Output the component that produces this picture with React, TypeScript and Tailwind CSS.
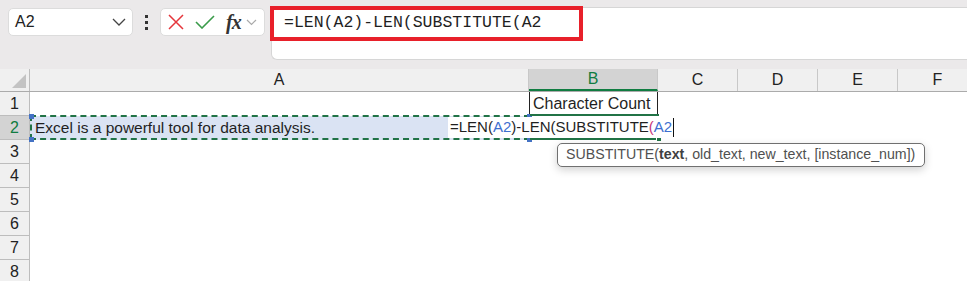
import React from 'react';

const cols = [
  {name: 'A', w: 'w-[499px]'},
  {name: 'B', w: 'w-[129px]', selected: true},
  {name: 'C', w: 'w-[80px]'},
  {name: 'D', w: 'w-[80px]'},
  {name: 'E', w: 'w-[80px]'},
  {name: 'F', w: 'w-[80px]'},
];

const sans = "font-['Liberation_Sans',Arial,sans-serif]";

export default function App() {
  return <div className="w-[967px] h-[281px] overflow-hidden bg-white relative">
    <Toolbar/>
    <Sheet/>
  </div>;
}

const Toolbar = () => {
  return <div className="h-[69px] bg-[#ebe9ea] flex items-start pt-[7px] pl-[8px]">
    <div className={`mt-[1px] w-[125px] h-[28px] bg-white rounded-[5px] border border-[#dcdcdc] flex items-center justify-between pl-[6px] pr-[6px] ${sans} text-[16px] text-[#222]`}>
      <span>A2</span>
      <svg width="14" height="8" viewBox="0 0 14 8" fill="none" stroke="#444" strokeWidth="1.3">
        <path d="M1 1l6 6 6-6"/>
      </svg>
    </div>
    <div className="w-[27px] h-[28px] mt-[1px] flex flex-col items-center justify-center gap-[3px]">
      <span className="w-[3px] h-[3px] bg-[#333]"/>
      <span className="w-[3px] h-[3px] bg-[#333]"/>
      <span className="w-[3px] h-[3px] bg-[#333]"/>
    </div>
    <div className="mt-[1px] w-[105px] h-[28px] bg-white rounded-[5px] border border-[#dcdcdc] flex items-center pl-[7px]">
      <svg width="16" height="16" viewBox="0 0 16 16" fill="none" stroke="#e5363c" strokeWidth="1.5">
        <path d="M1 1l14 14M15 1L1 15"/>
      </svg>
      <svg width="20" height="14" viewBox="0 0 20 14" fill="none" stroke="#3a9b4a" strokeWidth="1.6" className="ml-[11px]">
        <path d="M1 7l6 6L19 1"/>
      </svg>
      <span className="ml-[11px] font-['Liberation_Serif',serif] italic font-bold text-[20px] leading-none text-[#333] tracking-[-1px]">fx</span>
      <svg width="11" height="7" viewBox="0 0 11 7" fill="none" stroke="#aaa" strokeWidth="1.2" className="ml-[5px]">
        <path d="M1 1l4.5 4.5L10 1"/>
      </svg>
    </div>
    <div className="ml-[6px] flex-1 h-[53px] bg-white rounded-l-[6px] border border-r-0 border-[#d6d6d6] relative">
      <div className="absolute left-[-2px] top-[-2px] w-[313px] h-[35px] border-[4px] border-[#e8202a] flex items-center pl-[10px]">
        <span className="font-['Liberation_Mono',monospace] text-[16.5px] text-[#1f1f1f]">=LEN(A2)-LEN(SUBSTITUTE(A2</span>
      </div>
    </div>
  </div>;
}

const Sheet = () => {
  const rows = [1, 2, 3, 4, 5, 6, 7, 8];
  return <div className="relative">
    <div className="flex h-[23px] bg-[#f0f0f0] border-b border-[#ababab]">
      <div className="w-[30px] shrink-0 border-r border-[#bdbdbd] relative">
        <svg width="14" height="14" viewBox="0 0 14 14" className="absolute right-[3px] bottom-[3px]">
          <path d="M14 0V14H0Z" fill="#c3c3c3"/>
        </svg>
      </div>
      {cols.map(c => <div key={c.name} className={`${c.w} shrink-0 flex items-center justify-center border-r border-[#c8c8c8] ${sans} text-[16px] ${c.selected ? 'bg-[#d3d3d3] text-[#107c41] border-b-2 border-b-[#107c41]' : 'text-[#222]'}`}>{c.name}</div>)}
    </div>
    {rows.map(r => <div key={r} className="flex h-[24px]">
      <div className={`w-[30px] shrink-0 flex items-center justify-center border-b border-r border-[#bdbdbd] ${sans} text-[16px] ${r === 2 ? 'bg-[#d3d3d3] text-[#107c41]' : 'bg-[#f0f0f0] text-[#222]'}`}>{r}</div>
      <div className={`w-[499px] shrink-0 flex items-center pl-[5px] ${sans} text-[15.5px] text-[#1f1f1f] ${r === 2 ? 'bg-[#dae3f3]' : ''}`}>
        {r === 2 ? 'Excel is a powerful tool for data analysis.' : ''}
      </div>
      <div className={`w-[129px] shrink-0 flex items-center pl-[3px] ${sans} text-[16px] text-[#1f1f1f] ${r === 1 ? 'border-x border-[#222]' : ''}`}>
        {r === 1 ? 'Character Count' : ''}
      </div>
    </div>)}

    {/* range highlight on A2 */}
    <div className="absolute left-[30px] top-[46px] w-[500px] h-[25px] border-2 border-dashed border-[#217346]"/>
    {[[29, 45], [527, 45], [29, 68], [527, 68]].map(([x, y]) => <span key={`${x}-${y}`} className="absolute w-[5px] h-[5px] bg-[#4472c4]" style={{left: x, top: y}}/>)}

    {/* active cell B2 */}
    <div className="absolute left-[530px] top-[45px] w-[129px] h-[2px] bg-[#217346]"/>
    <div className="absolute left-[530px] top-[69px] w-[129px] h-[2px] bg-[#217346]"/>
    <span className="absolute left-[656px] top-[67px] w-[6px] h-[6px] bg-[#217346] border border-white"/>

    {/* in-cell editor */}
    <div className={`absolute left-[448px] top-[48px] h-[21px] bg-white flex items-center pl-[2px] pr-[1px] ${sans} text-[15px] text-[#1f1f1f]`}>
      <span>=LEN(</span><span className="text-[#3d6fd0]">A2</span><span>)-LEN(SUBSTITUTE</span><span className="text-[#c8357a]">(</span><span className="text-[#3d6fd0]">A2</span>
      <span className="w-[1px] h-[19px] bg-[#111] ml-[1px]"/>
    </div>

    {/* function tooltip */}
    <div className={`absolute left-[557px] top-[74px] w-[368px] h-[24px] bg-white border border-[#707070] rounded-[5px] shadow-[0_3px_8px_rgba(0,0,0,0.18)] flex items-center pl-[8px] ${sans} text-[14.2px] text-[#505050]`}>
      SUBSTITUTE(<b className="text-[#404040]">text</b>, old_text, new_text, [instance_num])
    </div>
  </div>;
}
